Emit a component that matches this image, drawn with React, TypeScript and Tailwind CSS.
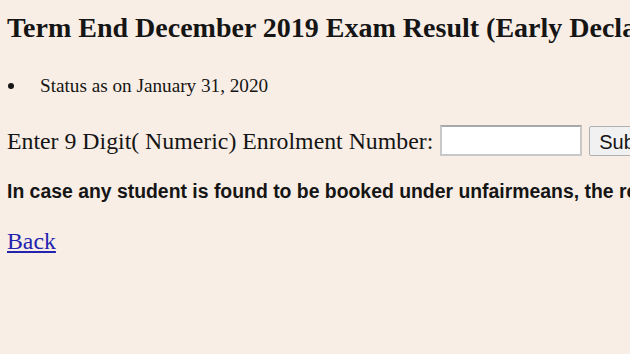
export default function App() {
  return (
    <div className="w-[630px] h-[354px] overflow-hidden bg-[#f9eee5] text-[#151515] whitespace-nowrap font-['Liberation_Serif',serif]">
      <div className="pl-[7px] pt-[12px]">
        <h3 className="text-[28px] font-bold leading-[32px]">
          Term End December 2019 Exam Result (Early Declaration of Results)
        </h3>
        <div className="mt-[31px] flex items-center text-[19.2px] leading-[22px]">
          <span className="ml-[1px] w-[6px] h-[6px] rounded-full bg-[#151515]" />
          <span className="ml-[26px]">Status as on January 31, 2020</span>
        </div>
        <form className="mt-[28px] flex items-center text-[23.8px] leading-[30px]">
          <span>Enter 9 Digit( Numeric) Enrolment Number:</span>
          <input
            type="text"
            className="ml-[7px] w-[142px] h-[31px] bg-white border-2 border-[#c8c8c8] border-t-[#a9a9a9]"
          />
          <button
            type="button"
            className="ml-[7px] h-[30px] px-[9px] bg-[#f1f1f1] border border-[#b0b0b0] rounded-[2px] font-['Liberation_Sans',sans-serif] text-[20px]"
          >
            Submit
          </button>
        </form>
        <p className="mt-[24px] font-['Liberation_Sans',sans-serif] font-bold text-[19.4px] leading-[22px]">
          In case any student is found to be booked under unfairmeans, the result will be withheld.
        </p>
        <a href="#" className="block mt-[24px] text-[23.8px] leading-[30px] text-[#2323b0] underline">
          Back
        </a>
      </div>
    </div>
  )
}
